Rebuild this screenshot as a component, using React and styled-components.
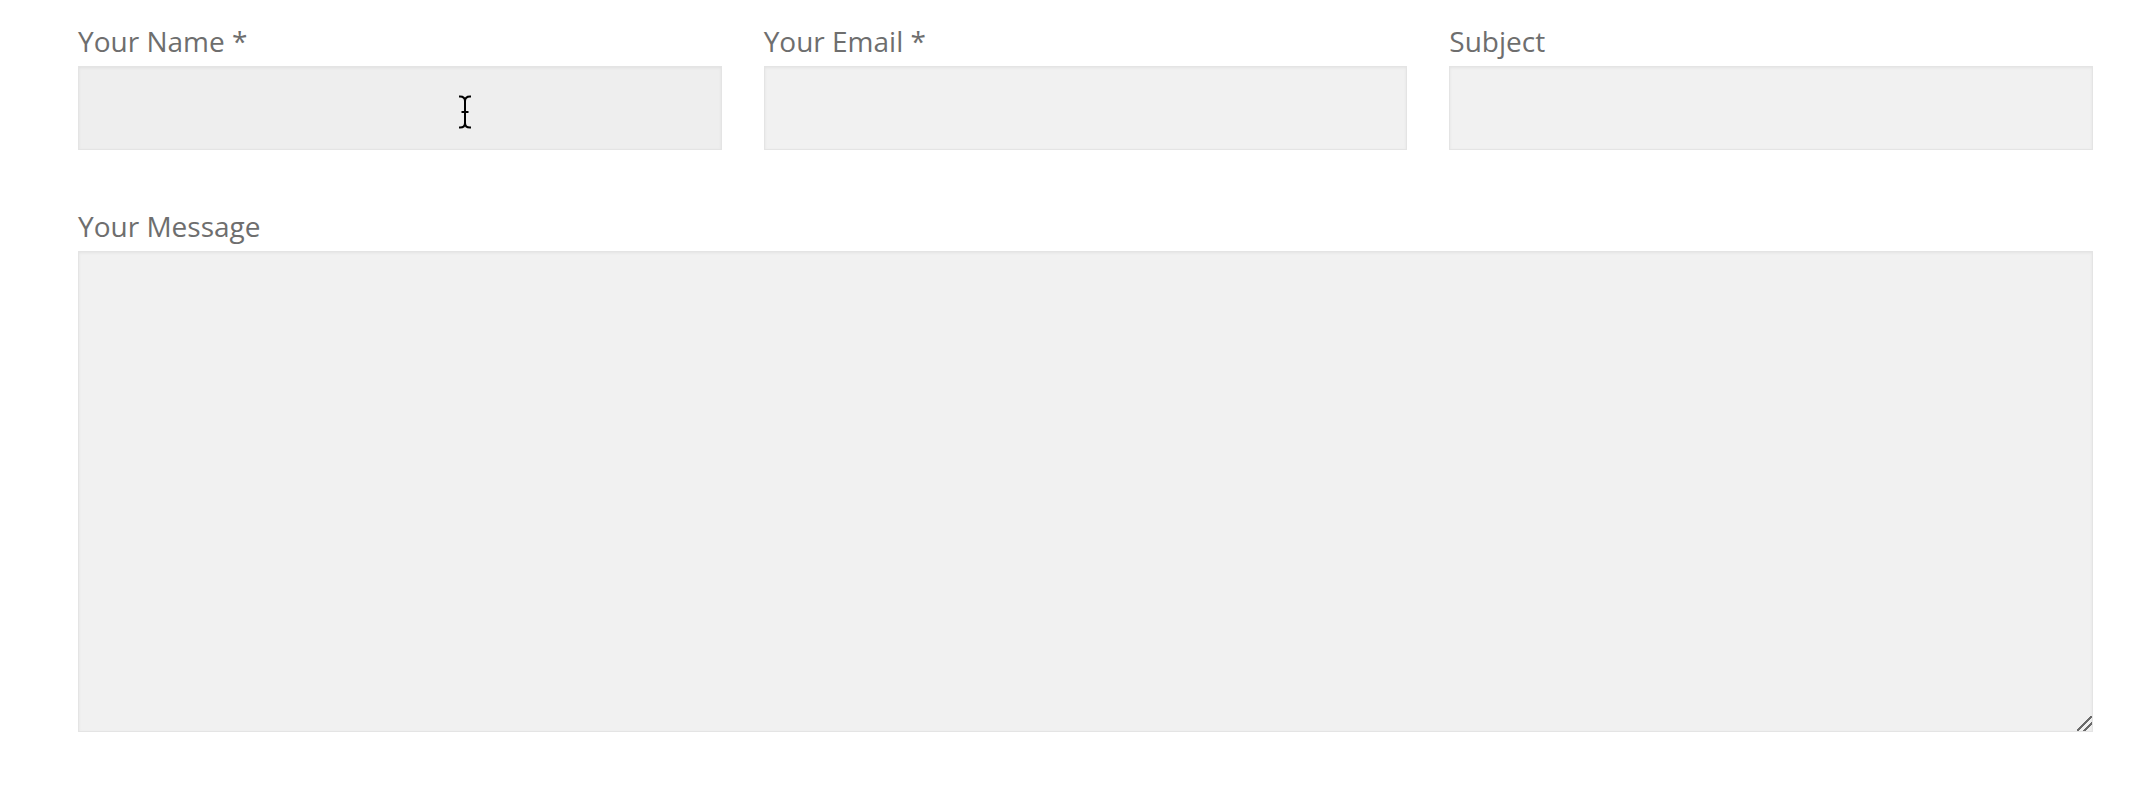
import React from "react";
import styled, { createGlobalStyle } from "styled-components";

const Global = createGlobalStyle`
  html, body { margin: 0; padding: 0; background: #ffffff; }
  body { font-family: "Open Sans", "Noto Sans", sans-serif; }
  * { box-sizing: border-box; }
`;

const Page = styled.div`
  padding: 21px 0 0 78px;
  width: 2093px;
`;

const Form = styled.form`
  display: flex;
  flex-direction: column;
  gap: 56px;
`;

const Row = styled.div`
  display: grid;
  grid-template-columns: repeat(${(p) => p.$cols}, 1fr);
  column-gap: 42px;
`;

const Field = styled.div`
  display: flex;
  flex-direction: column;
  gap: 4px;
  position: relative;
`;

const Label = styled.label`
  font-family: "Open Sans", sans-serif;
  font-size: 28px;
  line-height: 41px;
  color: #6e6e6e;
  font-weight: 400;
`;

const Input = styled.input`
  display: block;
  width: 100%;
  height: 84px;
  border: 1px solid #e4e4e4;
  background: ${(p) => (p.$hover ? "#eeeeee" : "#f1f1f1")};
  box-shadow: inset 0 1px 3px rgba(0, 0, 0, 0.06);
  outline: none;
  font-family: "Open Sans", sans-serif;
  font-size: 22px;
  padding: 0 14px;
  margin: 0;
`;

const TextArea = styled.textarea`
  display: block;
  width: 100%;
  height: 481px;
  border: 1px solid #e4e4e4;
  background: #f1f1f1;
  box-shadow: inset 0 1px 3px rgba(0, 0, 0, 0.06);
  outline: none;
  resize: vertical;
  font-family: "Open Sans", sans-serif;
  font-size: 22px;
  padding: 14px;
  margin: 0;

  &::-webkit-resizer {
    background: linear-gradient(
      135deg,
      transparent 0%,
      transparent 46%,
      #6a6a6a 46%,
      #6a6a6a 56%,
      transparent 56%,
      transparent 70%,
      #6a6a6a 70%,
      #6a6a6a 80%,
      transparent 80%
    );
  }
`;

const CursorMark = styled.svg`
  position: absolute;
  left: ${(p) => p.$x}px;
  top: ${(p) => p.$y}px;
  pointer-events: none;
`;

const IBeam = ({ x, y }) => (
  <CursorMark $x={x} $y={y} width="16" height="34" viewBox="0 0 16 34">
    <path
      d="M3 1.5 Q8 1.5 8 6 Q8 1.5 13 1.5 M8 6 L8 28 Q8 32.5 3 32.5 M8 28 Q8 32.5 13 32.5 M5.5 17 L10.5 17"
      fill="none"
      stroke="#000"
      strokeWidth="2"
      strokeLinecap="square"
    />
  </CursorMark>
);

export default function App() {
  return (
    <Page>
      <Global />
      <Form onSubmit={(e) => e.preventDefault()}>
        <Row $cols={3}>
          <Field>
            <Label htmlFor="name">Your Name *</Label>
            <Input id="name" type="text" $hover />
            <IBeam x={379} y={74} />
          </Field>
          <Field>
            <Label htmlFor="email">Your Email *</Label>
            <Input id="email" type="email" />
          </Field>
          <Field>
            <Label htmlFor="subject">Subject</Label>
            <Input id="subject" type="text" />
          </Field>
        </Row>
        <Row $cols={1}>
          <Field>
            <Label htmlFor="message">Your Message</Label>
            <TextArea id="message" />
          </Field>
        </Row>
      </Form>
    </Page>
  );
}
